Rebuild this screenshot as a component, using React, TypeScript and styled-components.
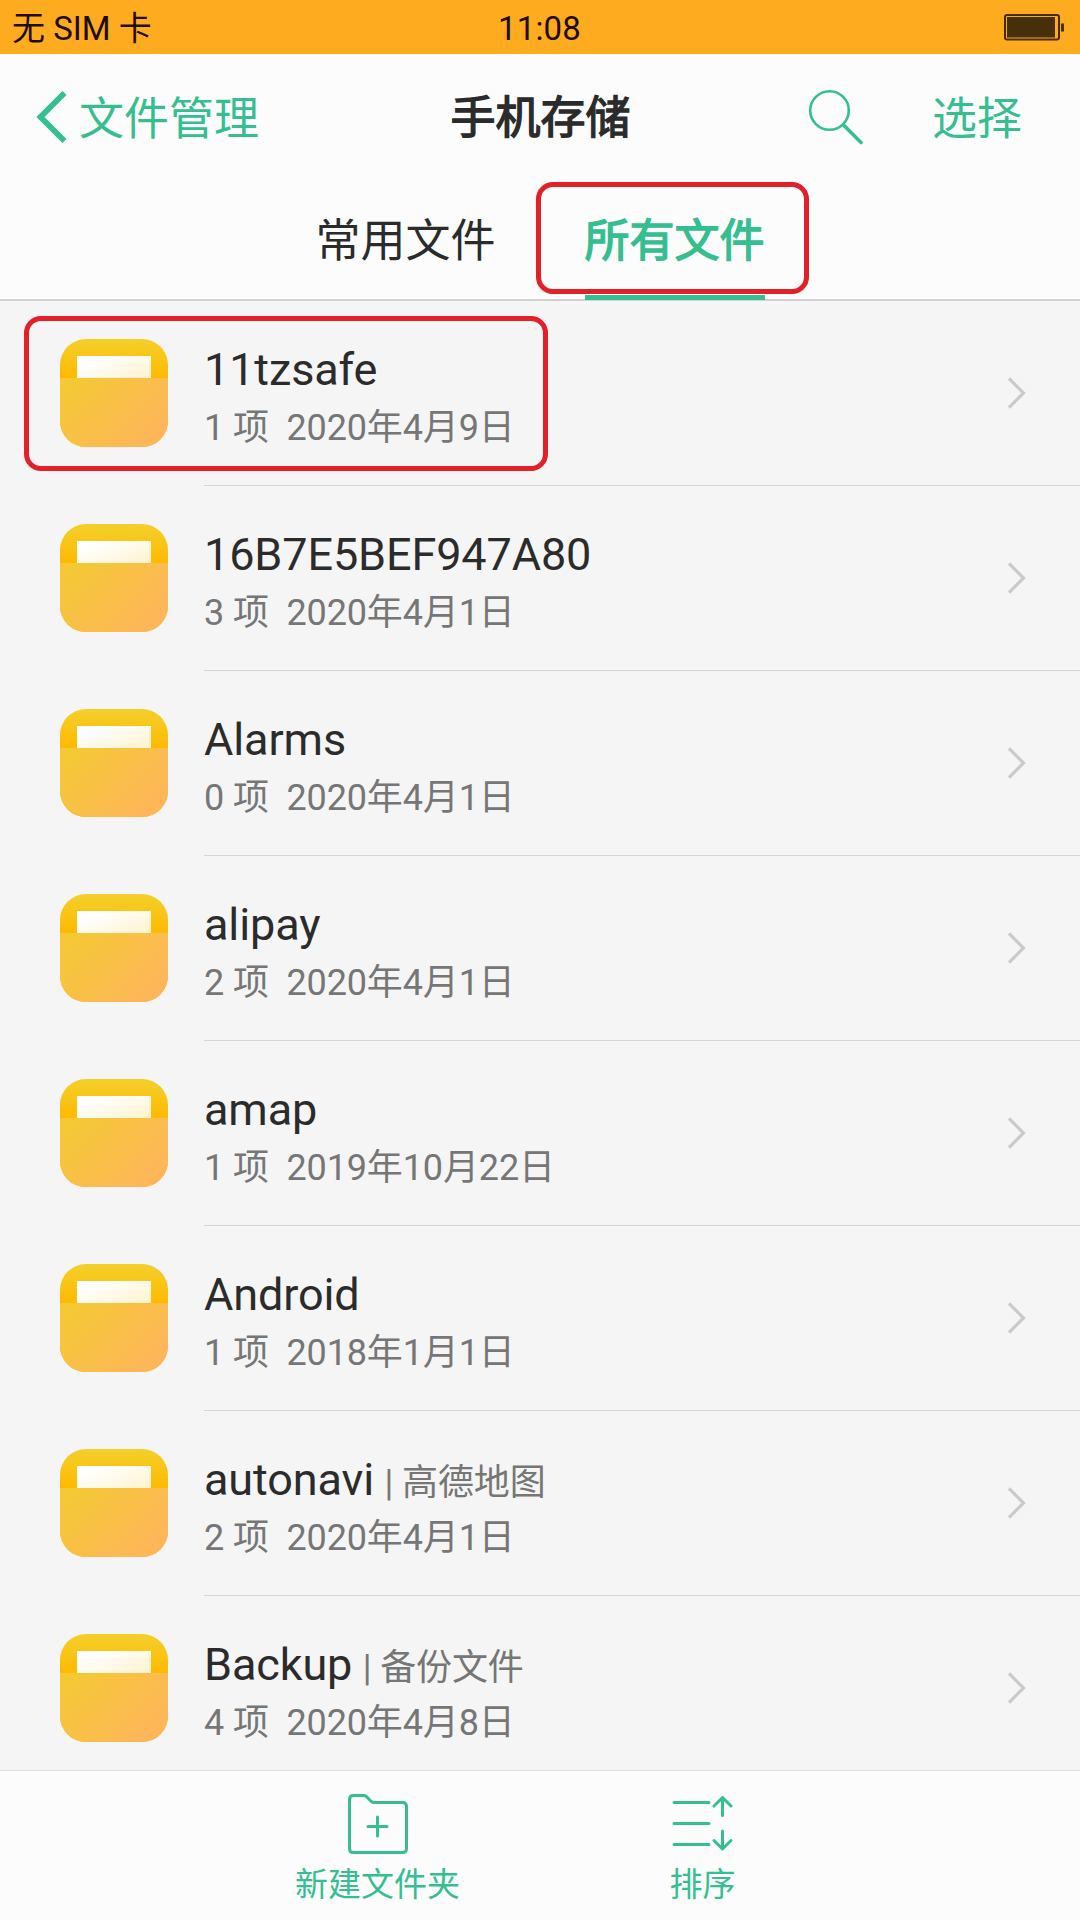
import React from "react";
import styled, { createGlobalStyle } from "styled-components";

const GREEN = "#35be90";

const GlobalStyle = createGlobalStyle`
  * { box-sizing: border-box; }
  body {
    margin: 0;
    background: #fcfcfc;
    font-family: Roboto, "Noto Sans CJK SC", sans-serif;
    -webkit-font-smoothing: antialiased;
  }
`;

const Screen = styled.div`
  width: 1080px;
  height: 1920px;
  display: flex;
  flex-direction: column;
  overflow: hidden;
  background: #fcfcfc;
`;

const StatusBar = styled.header`
  height: 54px;
  flex: none;
  display: grid;
  grid-template-columns: 1fr auto 1fr;
  align-items: start;
  padding: 0 16px 0 12px;
  background: #ffab1f;
  color: #1e0d05;
  font-size: 33px;
  line-height: 58px;
`;

const Clock = styled.span`
  padding-left: 3px;
  letter-spacing: 0.2px;
`;

const StatusEnd = styled.span`
  display: flex;
  justify-content: flex-end;
  padding-top: 14px;
`;

const NavBar = styled.nav`
  height: 126px;
  flex: none;
  display: grid;
  grid-template-columns: 1fr auto 1fr;
  align-items: center;
  padding: 0 35px 0 36px;
  font-size: 45px;
  line-height: 60px;
`;

const BackButton = styled.button`
  display: flex;
  align-items: center;
  gap: 12px;
  padding: 0;
  border: 0;
  background: none;
  color: ${GREEN};
  font: inherit;
`;

const Label = styled.span`
  padding-top: 5px;
`;

const Title = styled.h1`
  margin: 0;
  padding-top: 4px;
  color: #2b2b2b;
  font: inherit;
  -webkit-text-stroke: 1.4px currentColor;
`;

const NavActions = styled.div`
  display: flex;
  align-items: center;
  justify-content: flex-end;
  gap: 68px;
  padding-right: 23px;
`;

const TextButton = styled.button`
  padding: 5px 0 0;
  border: 0;
  background: none;
  color: ${GREEN};
  font: inherit;
`;

const Tabs = styled.div`
  height: 121px;
  flex: none;
  display: flex;
  justify-content: center;
  gap: 89px;
  border-bottom: 2px solid #d2d2d2;
`;

const Tab = styled.div<{ $active?: boolean }>`
  position: relative;
  width: 180px;
  height: 120px;
  padding-top: 32px;
  font-size: 45px;
  line-height: 60px;
  -webkit-text-stroke: ${(p) => (p.$active ? "1.4px currentColor" : "0")};
  color: ${(p) => (p.$active ? GREEN : "#2b2b2b")};
  border-bottom: ${(p) => (p.$active ? `5px solid ${GREEN}` : "0")};
`;

const Marker = styled.div<{ $inset: string }>`
  position: absolute;
  inset: ${(p) => p.$inset};
  border: 5px solid #e32027;
  border-radius: 17px;
  pointer-events: none;
`;

const FileList = styled.ul`
  flex: 1;
  min-height: 0;
  margin: 0;
  padding: 0;
  list-style: none;
  overflow: hidden;
  background: #f5f5f5;
`;

const Row = styled.li`
  position: relative;
  height: 185px;
  display: flex;
  align-items: stretch;
  padding-left: 60px;
  gap: 36px;
`;

const FolderIcon = styled.span`
  width: 108px;
  height: 108px;
  margin-top: 38px;
  display: flex;
  flex-direction: column;
  border-radius: 26px;
  overflow: hidden;
  background: linear-gradient(#f3d02c, #ffb900 39px);
`;

const FolderPaper = styled.span`
  width: 74px;
  height: 22px;
  margin: 17px 17px 0;
  background: linear-gradient(160deg, #ffffff 20%, #fff2cc);
`;

const FolderFront = styled.span`
  flex: 1;
  background: linear-gradient(135deg, #f4c935 8%, #feb659 85%);
`;

const RowBody = styled.div`
  flex: 1;
  display: flex;
  align-items: center;
  justify-content: space-between;
  padding-right: 52px;
  border-bottom: 1px solid #d6d6d6;
`;

const FileInfo = styled.div`
  display: flex;
  flex-direction: column;
  padding-top: 8px;
  white-space: pre;
  letter-spacing: -0.12px;
`;

const FileName = styled.div`
  height: 62px;
  color: #2b2b2b;
  font-size: 45px;
  line-height: 60px;
`;

const FileAlias = styled.span`
  margin-left: 10.5px;
  color: #767676;
  font-size: 36px;
`;

const FileMeta = styled.div`
  height: 52px;
  color: #767676;
  font-size: 36px;
  line-height: 52px;
`;

const BottomBar = styled.footer`
  height: 150px;
  flex: none;
  display: flex;
  justify-content: center;
  border-top: 1px solid #dfdfdf;
  background: #fcfcfc;
`;

const Action = styled.button`
  width: 325px;
  padding: 22px 0 0;
  display: flex;
  flex-direction: column;
  align-items: center;
  gap: 6px;
  border: 0;
  background: none;
  color: ${GREEN};
  font: inherit;
  font-size: 33px;
  line-height: 48px;
`;

const files = [
  { name: "11tzsafe", count: 1, date: "2020年4月9日", marked: true },
  { name: "16B7E5BEF947A80", count: 3, date: "2020年4月1日" },
  { name: "Alarms", count: 0, date: "2020年4月1日" },
  { name: "alipay", count: 2, date: "2020年4月1日" },
  { name: "amap", count: 1, date: "2019年10月22日" },
  { name: "Android", count: 1, date: "2018年1月1日" },
  { name: "autonavi", alias: "高德地图", count: 2, date: "2020年4月1日" },
  { name: "Backup", alias: "备份文件", count: 4, date: "2020年4月8日" },
];

const Battery = () => (
  <svg width="60" height="28" viewBox="0 0 60 28" fill="none">
    <rect x="1" y="1" width="54" height="24.500" rx="2" stroke="#4a2a08" strokeWidth="2" />
    <rect x="3" y="3" width="48" height="20.500" fill="#46300c" />
    <rect x="57" y="9.500" width="3" height="8" fill="#46300c" />
  </svg>
);

const BackIcon = () => (
  <svg width="31" height="52" viewBox="0 0 31 52" fill="none">
    <path d="M28.500 2 4.500 26 28.500 50" stroke={GREEN} strokeWidth="5.800" />
  </svg>
);

const SearchIcon = () => (
  <svg width="56" height="56" viewBox="0 0 56 56" fill="none" stroke={GREEN} strokeLinecap="round">
    <circle cx="21.500" cy="21.500" r="19.300" strokeWidth="2.600" />
    <path d="M35.500 36 53 53.500" strokeWidth="3.600" />
  </svg>
);

const ChevronIcon = () => (
  <svg width="20" height="34" viewBox="0 0 20 34" fill="none">
    <path d="M1 2.500 15.500 17 1 31.500" stroke="#cacaca" strokeWidth="3.200" />
  </svg>
);

const NewFolderIcon = () => (
  <svg width="62" height="62" viewBox="0 0 62 62" fill="none" stroke={GREEN} strokeWidth="3" strokeLinecap="round" strokeLinejoin="round">
    <path d="M6 2.500H17C21 2.500 22.500 9.500 27 9.500H55.500Q59.500 9.500 59.500 13.500V55.500Q59.500 59.500 55.500 59.500H6Q2.500 59.500 2.500 55.500V6.500Q2.500 2.500 6 2.500Z" />
    <path d="M21 33.500H40M30.500 24V43" />
  </svg>
);

const SortIcon = () => (
  <svg width="62" height="62" viewBox="0 0 62 62" fill="none" stroke={GREEN} strokeWidth="3" strokeLinecap="round" strokeLinejoin="round">
    <path d="M2 9.500H37M2 30.500H37M2 51.500H37" />
    <path d="M50.500 22.500V4.500M42 13 50.500 4.500 59 13M50.500 38V56M42 47.500 50.500 56 59 47.500" />
  </svg>
);

export default function App() {
  return (
    <Screen>
      <GlobalStyle />
      <StatusBar>
        <span>无 SIM 卡</span>
        <Clock>11:08</Clock>
        <StatusEnd>
          <Battery />
        </StatusEnd>
      </StatusBar>
      <NavBar>
        <BackButton>
          <BackIcon />
          <Label>文件管理</Label>
        </BackButton>
        <Title>手机存储</Title>
        <NavActions>
          <SearchIcon />
          <TextButton>选择</TextButton>
        </NavActions>
      </NavBar>
      <Tabs>
        <Tab>常用文件</Tab>
        <Tab $active>
          所有文件
          <Marker $inset="2px -44px 1px -49px" />
        </Tab>
      </Tabs>
      <FileList>
        {files.map((file) => (
          <Row key={file.name}>
            <FolderIcon>
              <FolderPaper />
              <FolderFront />
            </FolderIcon>
            <RowBody>
              <FileInfo>
                <FileName>
                  {file.name}
                  {file.alias && <FileAlias>| {file.alias}</FileAlias>}
                </FileName>
                <FileMeta>{`${file.count} 项  ${file.date}`}</FileMeta>
              </FileInfo>
              <ChevronIcon />
            </RowBody>
            {file.marked && <Marker $inset="15px 532px 15px 24px" />}
          </Row>
        ))}
      </FileList>
      <BottomBar>
        <Action>
          <NewFolderIcon />
          新建文件夹
        </Action>
        <Action>
          <SortIcon />
          排序
        </Action>
      </BottomBar>
    </Screen>
  );
}
